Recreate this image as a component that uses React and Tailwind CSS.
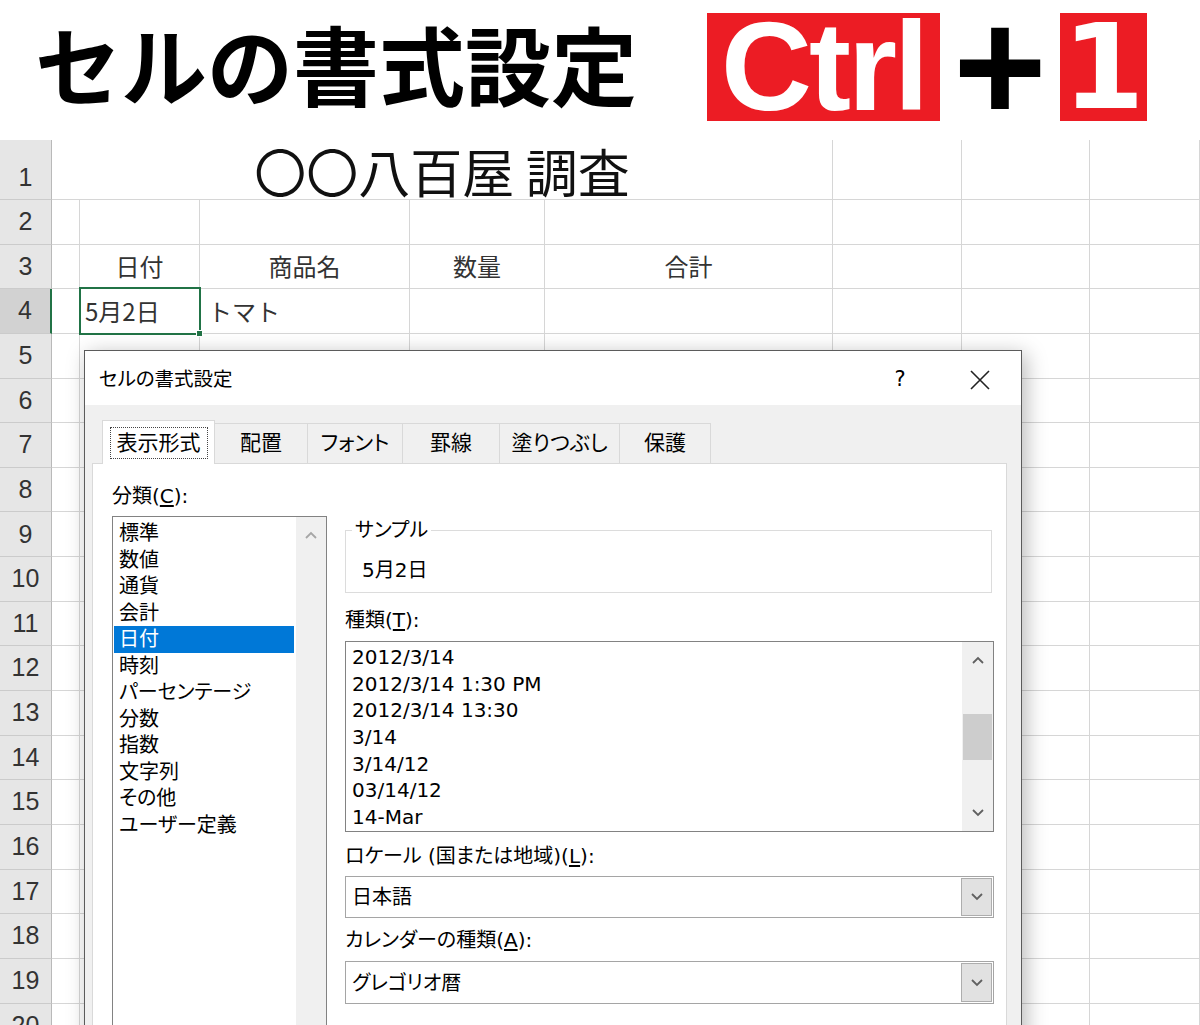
import React from 'react';

const jp = "font-['Noto_Sans_CJK_JP',sans-serif]";
const ui = "font-['DejaVu_Sans','Noto_Sans_CJK_JP',sans-serif] [font-feature-settings:'palt']";
const cellLine = 'border-b border-r border-[#d6d6d6]';

function Header() {
  return (
    <div className="flex h-[140px] items-start">
      <div className={`w-[707px] pl-[35px] text-[86px] font-bold leading-[126px] text-black ${jp}`}>
        セルの書式設定
      </div>
      <div className="mt-[13px] flex h-[108px] w-[233px] items-center justify-center bg-[#ec1c24] font-['Liberation_Sans',sans-serif] text-[126px] font-bold leading-[108px] tracking-[-3px] text-white">
        Ctrl
      </div>
      <div className="mt-[13px] flex h-[108px] w-[120px] items-center justify-center font-['Liberation_Sans',sans-serif] text-[160px] font-bold leading-[108px] text-black">
        +
      </div>
      <div className="mt-[13px] flex h-[108px] w-[87px] items-center justify-center bg-[#ec1c24] font-['DejaVu_Sans',sans-serif] text-[118px] font-bold leading-[108px] text-white">
        1
      </div>
    </div>
  );
}

function RowHead({ n, active, className = '' }) {
  return (
    <div
      className={`flex items-center justify-center border-b border-b-[#cbcbcb] font-['Liberation_Sans',sans-serif] text-[25px] text-[#333] ${
        active ? 'border-r-2 border-r-[#217346] bg-[#d2d2d2]' : 'border-r border-r-[#b9b9b9] bg-[#e6e6e6]'
      } ${className}`}
    >
      {n}
    </div>
  );
}

function Sheet() {
  const headers = { 2: '日付', 3: '商品名', 4: '数量', 5: '合計' };
  const rows = [];
  for (let r = 2; r <= 20; r++) {
    rows.push(<RowHead key={`${r}-h`} n={r} active={r === 4} />);
    for (let c = 1; c <= 8; c++) {
      const key = `${r}-${c}`;
      if (r === 4 && c === 2) {
        rows.push(
          <div key={key} className={`relative flex items-center pl-[5px] ${cellLine}`}>
            5月2日
            <div className="absolute -left-[1px] -top-[2px] h-[48px] w-[122px] border-2 border-[#217346]" />
            <div className="absolute -bottom-[4px] -right-[4px] h-[7px] w-[7px] border border-white bg-[#217346]" />
          </div>
        );
        continue;
      }
      let content = null;
      let extra = '';
      if (r === 3 && headers[c]) {
        content = headers[c];
        extra = 'justify-center';
      }
      if (r === 4 && c === 3) {
        content = 'トマト';
        extra = 'pl-[8px]';
      }
      rows.push(
        <div key={key} className={`flex items-center ${cellLine} ${extra}`}>
          {content}
        </div>
      );
    }
  }

  return (
    <div
      className={`grid grid-cols-[52px_28px_120px_210px_135px_288px_129px_128px_110px] grid-rows-[60px_repeat(19,44.65px)] text-[24px] text-[#333] ${jp}`}
    >
      <RowHead n={1} className="pt-[16px]" />
      <div className={`col-span-5 flex items-center justify-center pt-[2px] text-[52px] leading-[56px] text-[#111] ${cellLine}`}>
        〇〇八百屋 調査
      </div>
      <div className={cellLine} />
      <div className={cellLine} />
      <div className={cellLine} />
      {rows}
    </div>
  );
}

function Chevron({ up, color = '#606060' }) {
  return (
    <svg width="12" height="8" viewBox="0 0 12 8" fill="none">
      <polyline points={up ? '1,7 6,2 11,7' : '1,1 6,6 11,1'} stroke={color} strokeWidth="1.8" />
    </svg>
  );
}

function Combo({ value, h }) {
  return (
    <div className={`flex ${h} items-stretch border border-[#a5a5a5] bg-white`}>
      <div className="flex flex-1 items-center pl-[6px]">{value}</div>
      <div className="my-[1px] mr-[1px] flex w-[31px] items-center justify-center border border-[#adadad] bg-[#e1e1e1]">
        <Chevron />
      </div>
    </div>
  );
}

function FormatDialog() {
  const categories = ['標準', '数値', '通貨', '会計', '日付', '時刻', 'パーセンテージ', '分数', '指数', '文字列', 'その他', 'ユーザー定義'];
  const types = ['2012/3/14', '2012/3/14 1:30 PM', '2012/3/14 13:30', '3/14', '3/14/12', '03/14/12', '14-Mar'];
  const tabs = [
    ['配置', 'w-[93px]'],
    ['フォント', 'w-[95px]'],
    ['罫線', 'w-[97px]'],
    ['塗りつぶし', 'w-[120px]'],
    ['保護', 'w-[91px]'],
  ];

  return (
    <div
      className={`absolute left-[84px] top-[350px] flex h-[700px] w-[938px] flex-col border border-[#5b5b5b] bg-[#f0f0f0] text-[20px] text-black shadow-[4px_4px_20px_rgba(0,0,0,0.28)] ${ui}`}
    >
      {/* title bar */}
      <div className="flex h-[54px] shrink-0 items-center bg-white pl-[14px] pt-[4px] text-[19.5px]">
        <span>セルの書式設定</span>
        <span className="ml-auto w-[30px] text-center text-[21px]">?</span>
        <span className="ml-[45px] mr-[21px] flex w-[40px] justify-center">
          <svg width="20" height="20" viewBox="0 0 20 20">
            <path d="M1 1 L19 19 M19 1 L1 19" stroke="#222" strokeWidth="1.6" />
          </svg>
        </span>
      </div>

      {/* tabs */}
      <div className="relative z-10 flex h-[58px] shrink-0 items-end pl-[17px] text-[21px]">
        <div className="-mb-px flex h-[44px] w-[113px] items-center justify-center border border-b-0 border-[#d9d9d9] bg-white">
          <span className="border border-dotted border-[#444] px-[6px] leading-[30px]">表示形式</span>
        </div>
        {tabs.map(([label, w]) => (
          <div key={label} className={`flex h-[40px] ${w} items-center justify-center border-r border-t border-[#d9d9d9] bg-[#f0f0f0]`}>
            {label}
          </div>
        ))}
      </div>

      {/* panel */}
      <div className="ml-[7px] flex min-h-0 w-[915px] flex-1 overflow-hidden border border-[#d9d9d9] bg-white pl-[19px] pt-[19px]">
        <div className="flex w-[215px] shrink-0 flex-col">
          <div className="leading-[26px]">
            分類(<span className="underline underline-offset-2">C</span>):
          </div>
          <div className="mt-[7px] flex h-[600px] shrink-0 border border-[#828282]">
            <div className="flex-1 pl-[1px] pr-[2px] pt-[3px]">
              {categories.map((c) => (
                <div key={c} className={`pl-[5px] leading-[26.5px] ${c === '日付' ? 'bg-[#0078d7] text-white' : ''}`}>
                  {c}
                </div>
              ))}
            </div>
            <div className="flex w-[30px] justify-center bg-[#f0f0f0] pt-[14px]">
              <div className="h-[8px]">
                <Chevron up color="#a6a6a6" />
              </div>
            </div>
          </div>
        </div>

        <div className="ml-[18px] flex w-[649px] shrink-0 flex-col">
          <div className="relative mt-[47px] h-[63px] w-[647px] shrink-0 border border-[#dcdcdc]">
            <span className="absolute -top-[14px] left-[6px] bg-white px-[3px] leading-[26px]">サンプル</span>
            <div className="pl-[16px] pt-[26px] leading-[26px]">5月2日</div>
          </div>

          <div className="mt-[14px] leading-[26px]">
            種類(<span className="underline underline-offset-2">T</span>):
          </div>
          <div className="mt-[8px] flex h-[191px] shrink-0 border border-[#828282]">
            <div className="flex-1 pl-[6px] pt-[2px]">
              {types.map((t) => (
                <div key={t} className="leading-[26.67px]">
                  {t}
                </div>
              ))}
            </div>
            <div className="flex w-[31px] flex-col bg-[#f0f0f0]">
              <div className="flex h-[36px] items-center justify-center">
                <Chevron up />
              </div>
              <div className="mx-[1px] mt-[36px] h-[46px] bg-[#cdcdcd]" />
              <div className="flex-1" />
              <div className="flex h-[36px] items-center justify-center">
                <Chevron />
              </div>
            </div>
          </div>

          <div className="mt-[11px] leading-[26px]">
            ロケール (国または地域)(<span className="underline underline-offset-2">L</span>):
          </div>
          <div className="mt-[7px]">
            <Combo value="日本語" h="h-[42px]" />
          </div>

          <div className="mt-[9px] leading-[26px]">
            カレンダーの種類(<span className="underline underline-offset-2">A</span>):
          </div>
          <div className="mt-[8px]">
            <Combo value="グレゴリオ暦" h="h-[43px]" />
          </div>
        </div>
      </div>
    </div>
  );
}

export default function App() {
  return (
    <div className="relative h-[1025px] w-[1200px] overflow-hidden bg-white">
      <Header />
      <Sheet />
      <FormatDialog />
    </div>
  );
}
